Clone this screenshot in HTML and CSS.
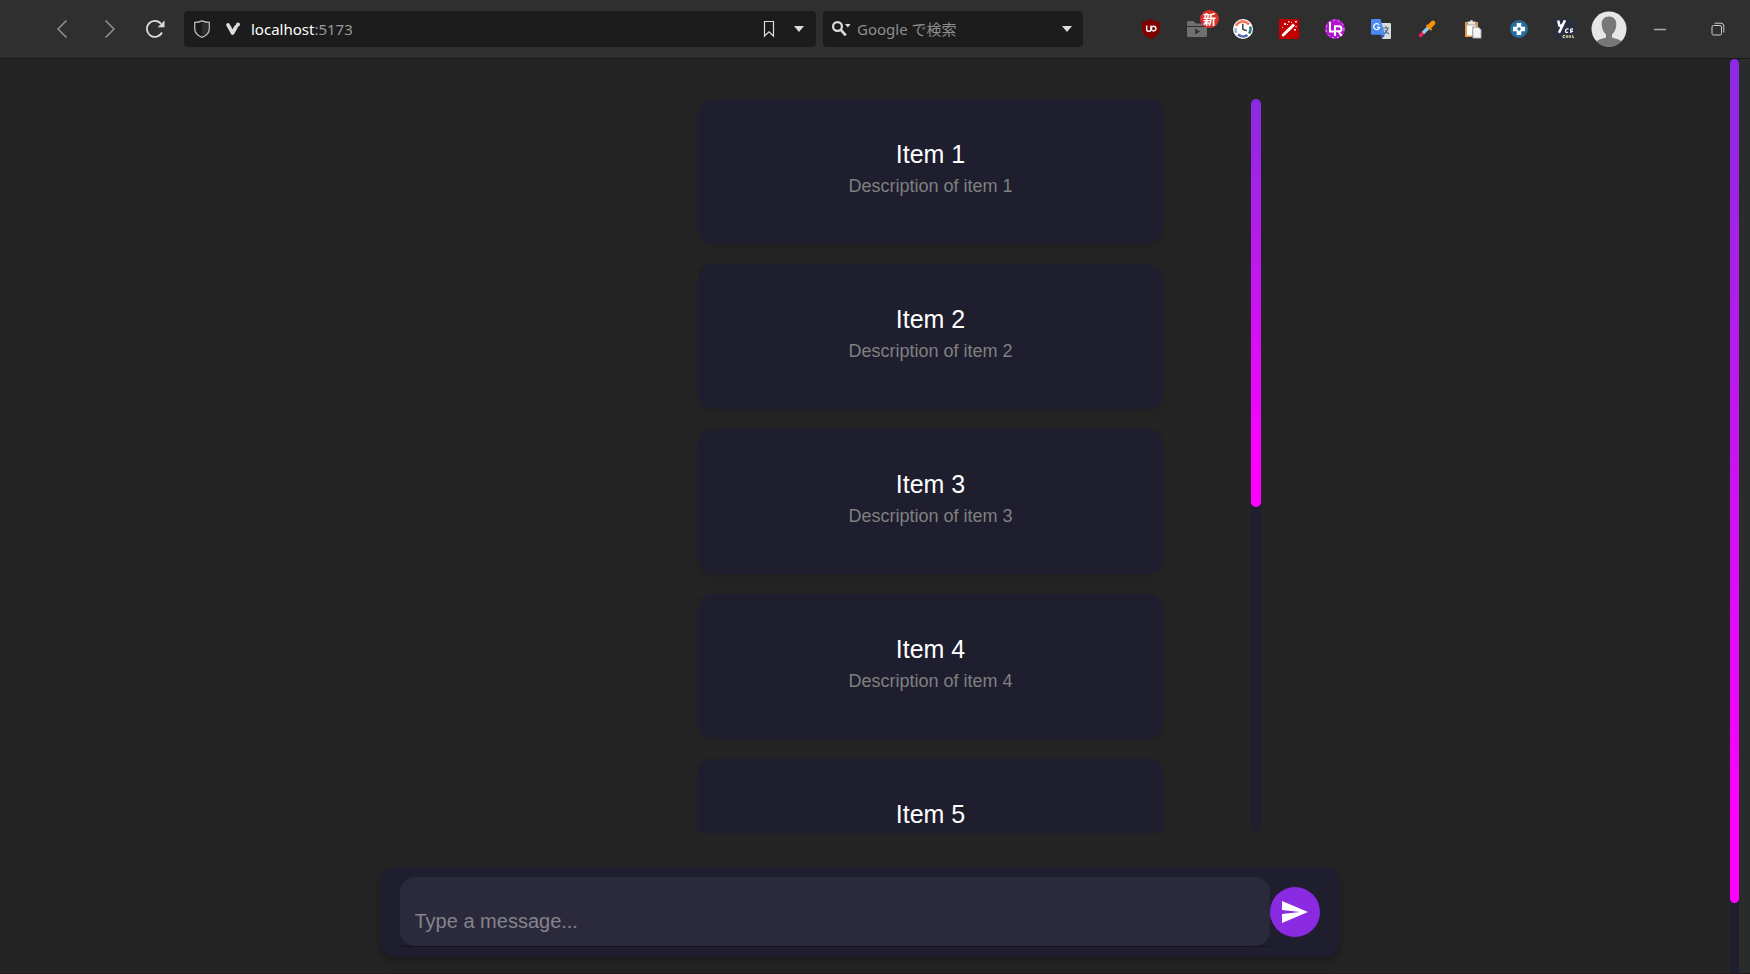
FILE: index.html
```html
<!DOCTYPE html>
<html lang="en">
<head>
<meta charset="utf-8">
<title>localhost:5173</title>
<link rel="stylesheet" href="styles.css">
</head>
<body>
<header class="toolbar">
  <nav class="nav-buttons">
    <button class="icon-button" aria-label="Back"><svg width="20" height="20" viewBox="0 0 20 20" fill="none" stroke="#929292" stroke-width="1.5"><path d="M14.500 1.500 6 10l8.500 8.500"/></svg></button>
    <button class="icon-button" aria-label="Forward"><svg width="20" height="20" viewBox="0 0 20 20" fill="none" stroke="#929292" stroke-width="1.500"><path d="M5.500 1.500 14 10l-8.500 8.500"/></svg></button>
    <button class="icon-button" aria-label="Reload"><svg width="20" height="20" viewBox="0 0 20 20"><path d="M16 4.700A8 8 0 1 0 17 13.500" fill="none" stroke="#ddd" stroke-width="1.900"/><path d="M19.500 1.500v6.800h-6.800z" fill="#ddd"/></svg></button>
  </nav>
  <div class="field address">
    <svg width="18" height="20" viewBox="0 0 18 20"><path d="M9 1.800C6.500 3 4 3.300 1.700 3.300V9.500c0 4.500 3.300 7.300 7.300 8.800 4-1.500 7.300-4.300 7.300-8.800V3.300C14 3.300 11.500 3 9 1.800z" fill="#1b1b1b" stroke="#bbb" stroke-width="1.300"/><path d="M9 3.500v13.600c3.500-1.500 6-4 6-7.600V4.500C13 4.500 11 4.200 9 3.500z" fill="#2e2e2e"/></svg>
    <svg width="16" height="16" viewBox="0 0 16 16"><path d="M3 3.800 7.600 12 11 6" fill="none" stroke="#ddd" stroke-width="3.600" stroke-linecap="round" stroke-linejoin="round"/><circle cx="13" cy="3.500" r="2" fill="#ddd"/><path d="M11 6l2-2.500" stroke="#ddd" stroke-width="2.400"/></svg>
    <a class="url" href="#"><span class="host">localhost</span>:5173</a>
    <button class="field-button" aria-label="Bookmark"><svg width="12" height="18" viewBox="0 0 12 18"><path d="M1.500 1.500h9v14.500L6 11.800 1.500 16z" fill="none" stroke="#ddd" stroke-width="1.200"/></svg></button>
    <button class="field-button" aria-label="Show history"><svg width="12" height="8" viewBox="0 0 12 8"><path d="M1 1h10L6 7z" fill="#ddd"/></svg></button>
  </div>
  <div class="field search">
    <svg width="20" height="18" viewBox="0 0 20 18"><circle cx="6.500" cy="6.500" r="4.400" fill="none" stroke="#ddd" stroke-width="2.200"/><path d="m9.800 9.800 5 5.500" stroke="#ddd" stroke-width="2.600"/><path d="M14 4h5.500l-2.700 3.500z" fill="#ddd"/></svg>
    <input class="search-input" type="text" placeholder="Google で検索" aria-label="Google で検索">
    <button class="field-button" aria-label="Search engines"><svg width="12" height="8" viewBox="0 0 12 8"><path d="M1 1h10L6 7z" fill="#ddd"/></svg></button>
  </div>
  <div class="extensions">
    <button class="extension" aria-label="uBlock"><svg width="20" height="20" viewBox="0 0 20 20"><path d="M10 0C7 2 4 2.500 1 2.800V10c0 5 4.500 8 9 10 4.500-2 9-5 9-10V2.800C16 2.500 13 2 10 0z" fill="#800000"/><g fill="none" stroke="#eee" stroke-width="1.500"><path d="M5.700 6.500v3.700a2.100 2.100 0 0 0 4.200 0V6.500"/><circle cx="12.600" cy="9.600" r="2.300"/></g></svg></button>
    <button class="extension" aria-label="Video folder"><svg width="20" height="20" viewBox="0 0 20 20"><path d="M0 3.500q0-1.500 1.500-1.500h5l2 2.500H18.500q1.500 0 1.500 1.500v1H0zM0 8h20v8.500q0 1.500-1.500 1.500h-17Q0 18 0 16.500z" fill="#707070"/><path d="M8 9.500v6l5-3z" fill="#333"/></svg><span class="badge">新</span></button>
    <button class="extension" aria-label="Clock"><svg width="20" height="20" viewBox="0 0 20 20"><circle cx="10" cy="10" r="10" fill="#fff"/><g fill="none" stroke-width="2.400"><path d="M3 7A7.600 7.600 0 0 1 16 5.500" stroke="#ed7b5b"/><path d="M17.200 7.500a7.600 7.600 0 0 1-1.200 7" stroke="#2a7476"/><path d="M14.500 16a7.600 7.600 0 0 1-9.500-.5" stroke="#4c68a8"/><path d="M3.500 14A7.600 7.600 0 0 1 2.600 9" stroke="#9cb6dc"/><path d="M9.800 4.800v5.400l4 1.500" stroke="#444" stroke-width="1.500"/></g></svg></button>
    <button class="extension" aria-label="Wand"><svg width="20" height="20" viewBox="0 0 20 20"><path d="M0 0h20v20H0z" fill="#c30000"/><path d="m4.200 16 8.200-7.800" stroke="#fff" stroke-width="3" stroke-linecap="round"/><path d="m13 7.500 2-2" stroke="#fff" stroke-width="2.800"/><g fill="#ffdede"><path d="M5 4h2v2H5zM9 2h1.500v1.500H9zM12 3h1v1h-1zM16 2h2v1.500h-2zM16.500 7h1.200v1.200h-1.200zM15 10h2v1.500h-2zM3 8h1v1H3zM8 5h1v1H8z"/></g></svg></button>
    <button class="extension" aria-label="LR"><svg width="20" height="20" viewBox="0 0 20 20"><circle cx="10" cy="10" r="10" fill="#b315ce"/><circle cx="10" cy="10" r="9" fill="none" stroke="#e3a0ee" stroke-dasharray="2 3"/><path d="M5 3v9.500h5.500M10 17V7.200h4q2.500 0 2.500 2.500t-2.500 2.500h-3.500m3 0 3 4.800" fill="none" stroke="#fff" stroke-width="2"/></svg></button>
    <button class="extension" aria-label="Translate"><svg width="20" height="20" viewBox="0 0 20 20"><path d="M9 4h10q1 0 1 1v14q0 1-1 1h-8z" fill="#d8dcdf"/><path d="M12 9h6m-3-2v2m2 0q-1 4-4 6m1-4q1 2.500 4 4" fill="none" stroke="#546e7a" stroke-width="1.200"/><path d="m10 15.500 4 .2-3 4.300z" fill="#3257c0"/><path d="M1 0h8.500L14 15.700H1q-1 0-1-1V1Q0 0 1 0z" fill="#4a8af4"/><path d="M8.200 6A3 3 0 1 0 8.600 8.400H6" fill="none" stroke="#fff" stroke-width="1.300"/></svg></button>
    <button class="extension" aria-label="Color picker"><svg width="20" height="20" viewBox="0 0 20 20"><path d="m3.500 16.500 2.500-2.500" stroke="#e91e63" stroke-width="3.400" stroke-linecap="round"/><path d="m6 14 5.500-5.500" stroke="#90caf9" stroke-width="3.400"/><path d="m13 7 3-3" stroke="#ff9100" stroke-width="4.600" stroke-linecap="round"/><path d="m9.500 6 5 5" stroke="#ff9100" stroke-width="2"/></svg></button>
    <button class="extension" aria-label="Clipboard"><svg width="20" height="20" viewBox="0 0 20 20"><path d="M2 3h13v15H2z" fill="#e69d45"/><path d="M4 5h9v11.500H4z" fill="#fff"/><path d="M4.500 2.500h2.200q1.800-3 3.600 0h2.200v3.500h-8z" fill="#e4e4e4" stroke="#777" stroke-width=".6"/><path d="M9.800 8h5.700l2.700 2.800v8.400H9.800z" fill="#f4f4f4" stroke="#777" stroke-width=".8"/></svg></button>
    <button class="extension" aria-label="Gamepad"><svg width="20" height="20" viewBox="0 0 20 20"><circle cx="10" cy="10" r="9" fill="#266e9d"/><path d="M7.700 4h4.600v3.700H16v4.600h-3.700V16H7.700v-3.700H4V7.700h3.700z" fill="#fff"/><circle cx="10" cy="10" r="1.700" fill="#266e9d"/></svg></button>
    <button class="extension" aria-label="Ycs"><svg width="20" height="20" viewBox="0 0 20 20"><path d="M0 0h20v20H0z" fill="#292f3e"/><g fill="none" stroke="#fff"><path d="m3.200 1.500 1.200 5.200q2 1 3.500-1.500M10 1.200 4 13.800" stroke-width="2.500"/><path d="M13.500 10q-3-.5-3 2t2.500 1M18 10q-2.500-.5-2.500 1t1.500 1.200-2 1.300" stroke-width="1.300"/></g><path d="M10 16.500H8v2.200h2m1.200-1.900h1.500v1.500h-1.500zm3 2v-2h1.500v2m2-2.800v2.500h1.500" fill="none" stroke="#d9d49a"/></svg></button>
  </div>
  <button class="profile" aria-label="Profile"><svg width="36" height="36" viewBox="0 0 36 36"><circle cx="18" cy="18" r="17.500" fill="#e6e6e6"/><path d="M18 5.500c-5 0-7.500 3.500-7.300 8 .2 4.500 2 8 4.300 10v3c-3 1.200-7.500 1.500-9.500 4a17.500 17.500 0 0 0 25 0c-2-2.500-6.500-2.800-9.500-4v-3c2.300-2 4.100-5.500 4.300-10 .2-4.500-2.300-8-7.300-8z" fill="#777"/></svg></button>
  <div class="window-buttons">
    <button class="icon-button" aria-label="Minimize"><svg width="14" height="14" viewBox="0 0 14 14"><path d="M1 7.500h12" stroke="#aaa" stroke-width="1.500"/></svg></button>
    <button class="icon-button" aria-label="Restore"><svg width="14" height="14" viewBox="0 0 14 14" fill="none" stroke="#ccc"><rect x="1" y="3.500" width="9.500" height="9.500" rx="1.500"/><path d="M3.500 1.200H10q2.800 0 2.800 2.800v6.500"/></svg></button>
  </div>
</header>
<div class="viewport">
  <main class="page">
    <section class="feed">
      <ul class="items">
        <li class="card"><h2 class="card-title">Item 1</h2><p class="card-text">Description of item 1</p></li>
        <li class="card"><h2 class="card-title">Item 2</h2><p class="card-text">Description of item 2</p></li>
        <li class="card"><h2 class="card-title">Item 3</h2><p class="card-text">Description of item 3</p></li>
        <li class="card"><h2 class="card-title">Item 4</h2><p class="card-text">Description of item 4</p></li>
        <li class="card"><h2 class="card-title">Item 5</h2></li>
      </ul>
      <div class="track track-feed"><div class="thumb thumb-feed"></div></div>
    </section>
    <form class="composer">
      <div class="message-box"><input class="message" type="text" placeholder="Type a message..." aria-label="Type a message"></div>
      <button class="send" type="button" aria-label="Send"><svg width="30" height="30" viewBox="0 0 30 30"><path d="M2 4v9l18 2-18 2v9l26-11z" fill="#fff"/></svg></button>
    </form>
  </main>
  <div class="track track-page"><div class="thumb thumb-page"></div></div>
</div>
</body>
</html>
```

FILE: styles.css
```css
* {
  box-sizing: border-box;
}

body {
  margin: 0;
  height: 100vh;
  display: flex;
  flex-direction: column;
  overflow: hidden;
  background: #242424;
  color: #fff;
  font-family: "Liberation Sans", Arial, sans-serif;
}

button {
  padding: 0;
  border: 0;
  background: none;
  display: flex;
  align-items: center;
  justify-content: center;
}

input {
  border: 0;
  outline: 0;
  background: none;
}

svg {
  display: block;
  flex: none;
}

.toolbar {
  flex: none;
  height: 59px;
  padding: 0 7px 1px 38px;
  display: flex;
  align-items: center;
  background: #2f2f2f;
  border-bottom: 1px solid #1a1a1a;
  font-family: "Noto Sans", "Noto Sans CJK JP", sans-serif;
  font-size: 15px;
}

.nav-buttons {
  display: flex;
  flex: none;
  width: 146px;
}

.icon-button {
  width: 48px;
  height: 36px;
}

.nav-buttons .icon-button:last-child {
  width: 42px;
}

.field {
  display: flex;
  align-items: center;
  height: 36px;
  border-radius: 4px;
  background: #1c1c1c;
}

.address {
  flex: 1;
  gap: 14px;
  padding: 0 11px 0 9px;
}

.url {
  flex: 1;
  margin-left: -4px;
  color: #999;
  text-decoration: none;
}

.host {
  color: #fff;
}

.field-button {
  height: 36px;
  margin-left: 4px;
}

.search {
  flex: none;
  width: 260px;
  margin-left: 7px;
  padding: 0 10px 0 8px;
  gap: 6px;
}

.search-input {
  flex: 1;
  min-width: 0;
  padding: 0;
  color: #ddd;
  font: inherit;
}

.search-input::placeholder {
  color: #8e8e8e;
}

.extensions {
  display: flex;
  flex: none;
  margin-left: 45px;
}

.extension {
  position: relative;
  width: 46px;
  height: 36px;
}

.badge {
  position: absolute;
  top: -1px;
  left: 26px;
  width: 19px;
  height: 18px;
  border-radius: 9px;
  background: #d9302c;
  color: #fff;
  font: bold 13px/17px "Noto Sans CJK JP", sans-serif;
  text-align: center;
}

.profile {
  flex: none;
  margin-left: 3px;
}

.window-buttons {
  display: flex;
  flex: none;
  gap: 9px;
  margin-left: 9px;
}

.window-buttons .icon-button:first-child {
  width: 48px;
}

.window-buttons .icon-button:last-child {
  width: 50px;
}

.viewport {
  flex: 1;
  min-height: 0;
  display: flex;
  padding-right: 11px;
  background: #2a2c2b;
  border-bottom: 1px solid #201a1e;
}

.page {
  flex: 1;
  min-width: 0;
  display: flex;
  flex-direction: column;
  align-items: center;
  gap: 34px;
  padding: 40px 11px 16px 0;
  background: #242424;
}

.feed {
  flex: 1;
  min-height: 0;
  width: 100%;
  max-width: 803px;
  display: flex;
  padding-left: 152px;
}

.items {
  flex: 1;
  min-width: 0;
  overflow: hidden;
  display: flex;
  flex-direction: column;
  gap: 20px;
  margin: 0;
  padding: 0 88px;
  list-style: none;
}

.card {
  flex: none;
  min-height: 145px;
  padding: 39px 20px 42px;
  border-radius: 15px;
  background: #1e1e2e;
  box-shadow: 0 4px 8px rgba(0, 0, 0, 0.1);
  text-align: center;
}

.card-title {
  margin: 0;
  font-size: 25px;
  font-weight: 400;
  line-height: 32px;
}

.card-text {
  margin: 0;
  color: #808080;
  font-size: 18px;
  line-height: 32px;
}

.track {
  flex: none;
  width: 10px;
  border-radius: 5px;
  background: #1e1e2e;
}

.thumb {
  border-radius: 5px;
  background: linear-gradient(#8a2be2, #f0f 90%);
}

.thumb-feed {
  height: 55.600%;
}

.track-page {
  width: 9px;
  border-radius: 0;
}

.thumb-page {
  height: 92.300%;
}

.composer {
  flex: none;
  width: 100%;
  max-width: 960px;
  display: flex;
  align-items: center;
  padding: 10px 20px;
  border-radius: 15px;
  background: #1e1e2e;
  box-shadow: 0 4px 8px rgba(0, 0, 0, 0.3);
}

.message-box {
  flex: 1;
  border-bottom: 1px solid #15141f;
}

.message {
  display: block;
  width: 100%;
  height: 69px;
  padding: 20px 15px 0;
  border-radius: 15px;
  background: #2b2a3c;
  color: #fff;
  font: 20px "Liberation Sans", Arial, sans-serif;
}

.message::placeholder {
  color: #85848c;
}

.send {
  flex: none;
  width: 50px;
  height: 50px;
  border-radius: 50%;
  background: #8a2be2;
}
```
